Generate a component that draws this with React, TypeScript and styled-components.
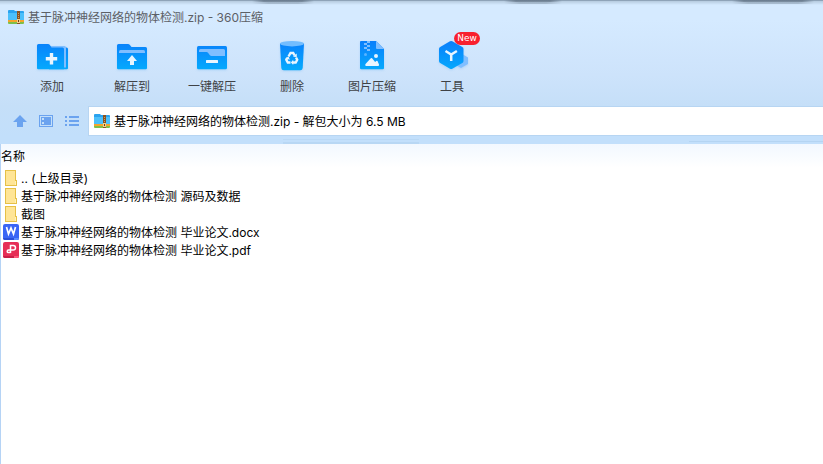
import React from "react";
import styled, { createGlobalStyle } from "styled-components";

const GlobalStyle = createGlobalStyle`
  * { box-sizing: border-box; }
  html, body, #root { height: 100%; margin: 0; }
  body, button, input, table {
    font-family: Inter, "Noto Sans CJK SC", sans-serif;
    font-size: 12px;
    line-height: 18px;
  }
  button { border: 0; padding: 0; background: none; cursor: pointer; }
  svg { display: block; flex: none; }
`;

const Window = styled.main`
  display: flex;
  flex-direction: column;
  min-height: 100%;
  background: #fff;
`;

const shade = "linear-gradient(90deg, #5d6e8000, #5d6e80b0 12px calc(100% - 12px), #5d6e8000)";
const softShade = "linear-gradient(90deg, #5d6e8000, #5d6e8050 16px calc(100% - 16px), #5d6e8000)";

const Header = styled.header`
  padding-bottom: 8px;
  background:
    linear-gradient(#b9d8f5, #b9d8f5) 283px 139px / 136px 1px no-repeat,
    linear-gradient(#b8d7f4, #b8d7f4) 283px 142px / 136px 2px no-repeat,
    linear-gradient(#b4d4f2, #b4d4f2) 689px 141px / 100% 1px no-repeat,
    ${shade} 252px 0 / 62px 2px no-repeat,
    ${softShade} 252px 2px / 62px 2px no-repeat,
    ${shade} 504px 0 / 58px 2px no-repeat,
    ${softShade} 504px 2px / 58px 2px no-repeat,
    ${shade} 732px 0 / 82px 2px no-repeat,
    ${softShade} 732px 2px / 82px 2px no-repeat,
    linear-gradient(#8ea3b8 0 1px, #b5cade 1px, #d5eaff00 5px),
    linear-gradient(#d5eaff 20px, #cde3fb 75px, #c5dff8 106px, #c2dffb 136px);
`;

const TitleBar = styled.div`
  display: flex;
  align-items: center;
  gap: 4px;
  height: 34px;
  padding: 0 8px;
`;

const Title = styled.h1`
  margin: 0;
  padding-top: 2px;
  font-size: 12px;
  font-weight: 400;
  color: #5c6066;
`;

const Toolbar = styled.nav`
  display: flex;
  height: 72px;
  padding: 4px 12px 0;
`;

const Tool = styled.button`
  position: relative;
  display: flex;
  flex-direction: column;
  align-items: center;
  gap: 4px;
  width: 80px;
  color: #3f4246;

  svg { filter: drop-shadow(0 1px 1px #6fb0f055); }
`;

const Badge = styled.span`
  position: absolute;
  top: -6px;
  left: 42px;
  width: 26px;
  border-radius: 7px;
  background: #f8202e;
  color: #fff;
  font-family: "DejaVu Sans", sans-serif;
  font-size: 9px;
  line-height: 13px;
`;

const AddressRow = styled.div`
  display: flex;
  align-items: stretch;
  height: 30px;
`;

const NavButtons = styled.div`
  display: flex;
  align-items: center;
  gap: 10px;
  width: 88px;
  padding-left: 12px;
`;

const NavButton = styled.button`
  width: 16px;
  height: 16px;
  color: #6ba3ef;
`;

const Address = styled.label`
  display: flex;
  flex: 1;
  align-items: center;
  gap: 4px;
  padding-left: 5px;
  border: 1px solid #b7d5f2;
  border-right: 0;
  background: #fff;
`;

const AddressInput = styled.input`
  flex: 1;
  min-width: 0;
  padding: 2px 0 0;
  border: 0;
  outline: 0;
  background: none;
  color: #000;
`;

const Files = styled.section`
  flex: 1;
  border-left: 1px solid #b5d3f5;
  background: linear-gradient(#f2f8ff, #fff 24px);
`;

const FileTable = styled.table`
  width: 100%;
  border-collapse: collapse;
  color: #000;
`;

const ColumnTitle = styled.th`
  height: 25px;
  padding: 0;
  font-weight: 400;
  text-align: left;
`;

const FileCell = styled.td`
  height: 18px;
  padding: 0 0 0 2px;
`;

const FileEntry = styled.div`
  display: flex;
  align-items: center;
  gap: 2px;
  height: 18px;
  white-space: pre;
`;

const FileName = styled.span`
  padding-top: 2px;
`;

const ZipIcon = () => (
  <svg width="16" height="16" viewBox="0 0 16 16" aria-hidden="true">
    <path d="M0 2q0-1 1-1h5l1 1h8q1 0 1 1v8H0z" fill="#2ba3ef" />
    <path d="M0 4h16v7H0z" fill="#4cc0fb" />
    <path d="M0 11h16v2H0z" fill="#f4a52b" />
    <path d="M0 13h16v1q0 1-1 1H1q-1 0-1-1z" fill="#7fbf4a" />
    <path d="M9 2h3v13H9z" fill="#8a5322" />
    <path d="M10 4h1v1h-1zM10 6h1v1h-1zM10 8h1v1h-1z" fill="#c99b62" />
    <path d="M9 10h3v4H9z" fill="#f3d08a" />
    <path d="M10 11h1v2h-1z" fill="#6b3d14" />
  </svg>
);

const Art = ({ children }: { children: React.ReactNode }) => (
  <svg width="32" height="36" viewBox="0 0 32 36" aria-hidden="true">
    <defs>
      <linearGradient id="blue" x1="0" y1="4" x2="0" y2="32" gradientUnits="userSpaceOnUse">
        <stop offset="0" stopColor="#0a80fb" />
        <stop offset="1" stopColor="#05aafd" />
      </linearGradient>
    </defs>
    {children}
  </svg>
);

const folder = "M1 7.500Q1 6 2.500 6H12q1 0 1.700.8L15.500 9H29.500Q31 9 31 10.500V30q0 1.300-1.300 1.300H2.300Q1 31.300 1 30z";

const tools = [
  {
    label: "添加",
    art: (
      <>
        <path d="M13 9.500h17.500q1.500 0 1.500 1.500v19q0 1.300-1.300 1.300H13z" fill="url(#blue)" />
        <path d="M13 8h15.500q1.500 0 1.500 1.500V29.500h-4V10H13z" fill="#80beff" />
        <path d="M1 7.500Q1 6 2.500 6H12q1 0 1.700.8L15.500 9.500H26.500Q28 9.500 28 11v20.300H2.300Q1 31.300 1 30z" fill="url(#blue)" />
        <path d="M13.800 15h3.400v4h4v3.400h-4v4h-3.400v-4h-4V19h4z" fill="#e8f5ff" />
      </>
    ),
  },
  {
    label: "解压到",
    art: (
      <>
        <path d={folder} fill="url(#blue)" />
        <path d="M3 15v-1.500Q3 12 4.500 12h23q1.500 0 1.500 1.500V15z" fill="#80beff" />
        <path d="m16 17 5 6h-3v4h-4v-4h-3z" fill="#e8f5ff" />
      </>
    ),
  },
  {
    label: "一键解压",
    art: (
      <>
        <rect x="1" y="8" width="30" height="23.300" rx="1.500" fill="url(#blue)" />
        <path d="M3 14v-1.500Q3 11 4.500 11h23q1.500 0 1.500 1.500V18H15.500q-1 0-1.600-.8L12 14.700q-.6-.7-1.500-.7z" fill="#80beff" />
        <rect x="10" y="22" width="12" height="3" rx=".5" fill="#e8f5ff" />
      </>
    ),
  },
  {
    label: "删除",
    art: (
      <>
        <path d="M4 5.500h24L26.700 30q-.2 2.300-2.500 2.300H7.800Q5.500 32.300 5.300 30z" fill="url(#blue)" />
        <ellipse cx="16" cy="5.700" rx="12" ry="2.700" fill="#73bdff" />
        <g fill="none" stroke="#e8f5ff" strokeWidth="2.400">
          <path d="m12.500 18.500 2-3.500h2.700l1.500 2.500" />
          <path d="m20 19.500 1.200 2.300-1.500 2.700h-3" />
          <path d="M14.500 24.500h-2.700l-1.500-2.700 1-1.800" />
        </g>
        <path d="m17 18.700 3.800.3-.1-3.500zM17.200 21.800v5.200l-2.300-2.600zM9.200 20.200l3.400-1.800 1.200 3.300z" fill="#e8f5ff" />
      </>
    ),
  },
  {
    label: "图片压缩",
    art: (
      <>
        <path d="M4 4q0-1 1-1h15l8 8v19q0 1.300-1.300 1.300H5.300Q4 31.300 4 30z" fill="url(#blue)" />
        <path d="m20 3 8 8h-7q-1 0-1-1z" fill="#80beff" />
        <path d="M11 3h3v2h-3zM8 5h3v2H8zM11 7h3v2h-3zM8 9h3v2H8zM11 11h3v2h-3z" fill="#80beff" />
        <circle cx="9.500" cy="16.500" r="1.500" fill="#58b3ff" />
        <circle cx="20" cy="18" r="2" fill="#e8f5ff" />
        <path d="m9.500 26 5.300-5.700q.7-.7 1.300 0l3 3.700 1.200-1q.7-.6 1.200 0l1.500 3.500q.3 1.500-1 1.500H10q-1.500-.5-.5-2z" fill="#e8f5ff" />
      </>
    ),
  },
  {
    label: "工具",
    badge: "New",
    art: (
      <>
        <path d="m27 16.500 5 3v6.500l-7 4-4-2.300z" fill="#80beff" />
        <path d="M14 3.300q1.200-.6 2.300 0l10 5.700q1.200.7 1.200 2v12q0 1.300-1.200 2l-10 5.700q-1.100.6-2.300 0L4.200 25Q3 24.300 3 23V11q0-1.300 1.200-2z" fill="url(#blue)" />
        <path d="m9.500 13 5.700 3.500 5.700-3.500M15.200 16.500V23" fill="none" stroke="#e8f5ff" strokeWidth="2.500" />
      </>
    ),
  },
];

const navItems = [
  { label: "向上", shape: <path d="m8 2 7 7h-4v5H5V9H1z" /> },
  {
    label: "预览",
    shape: (
      <>
        <path d="M1 2h14v12H1zm1 1v10h12V3z" fillRule="evenodd" />
        <path d="M3 4h10v8H3zm1 1v2h2V5zm0 4v2h2V9z" fillRule="evenodd" />
      </>
    ),
  },
  { label: "列表", shape: <path d="M1 3h2v2H1zM1 7h2v2H1zM1 11h2v2H1zM5 3h10v2H5zM5 7h10v2H5zM5 11h10v2H5z" /> },
];

type Kind = "folder" | "word" | "pdf";

const FileIcon = ({ kind }: { kind: Kind }) => (
  <svg width="16" height="16" viewBox="0 0 16 16" aria-hidden="true">
    {kind === "folder" && (
      <>
        <path d="M2 0h11v10h1v6H2z" fill="#e6c046" />
        <path d="M3 1h9v14H3z" fill="#ffe596" />
        <path d="M12 11h1v4h-1z" fill="#fff1b8" />
      </>
    )}
    {kind === "word" && (
      <>
        <rect width="16" height="16" rx="2" fill="#3b66f5" />
        <path d="M0 14h16q0 2-2 2H2q-2 0-2-2z" fill="#2c50d8" />
        <path d="M11 14h5q0 2-2 2h-3z" fill="#5b8cff" />
        <path d="m3.500 3 2 7L8 4l2.500 6 2-7" fill="none" stroke="#fff" strokeWidth="1.700" />
      </>
    )}
    {kind === "pdf" && (
      <>
        <rect width="16" height="16" rx="2" fill="#e62e56" />
        <path d="M0 14h16q0 2-2 2H2q-2 0-2-2z" fill="#c81f48" />
        <path d="M11 14h5q0 2-2 2h-3z" fill="#ff5578" />
        <path d="M7.500 11V3.500h2.700a2.300 2.300 0 0 1 0 4.600H5.500a1.300 1.300 0 0 0-1.300 1.300q0 1.100 1.300 1.100h2" fill="none" stroke="#fff" strokeWidth="1.500" />
      </>
    )}
  </svg>
);

const files: { name: string; kind: Kind }[] = [
  { name: ".. (上级目录)", kind: "folder" },
  { name: "基于脉冲神经网络的物体检测 源码及数据", kind: "folder" },
  { name: "截图", kind: "folder" },
  { name: "基于脉冲神经网络的物体检测 毕业论文.docx", kind: "word" },
  { name: "基于脉冲神经网络的物体检测 毕业论文.pdf", kind: "pdf" },
];

export default function App() {
  return (
    <Window>
      <GlobalStyle />
      <Header>
        <TitleBar>
          <ZipIcon />
          <Title>基于脉冲神经网络的物体检测.zip - 360压缩</Title>
        </TitleBar>
        <Toolbar>
          {tools.map((tool) => (
            <Tool key={tool.label} type="button">
              <Art>{tool.art}</Art>
              {tool.label}
              {tool.badge && <Badge>{tool.badge}</Badge>}
            </Tool>
          ))}
        </Toolbar>
        <AddressRow>
          <NavButtons>
            {navItems.map((item) => (
              <NavButton key={item.label} type="button" aria-label={item.label}>
                <svg width="16" height="16" viewBox="0 0 16 16" fill="currentColor">
                  {item.shape}
                </svg>
              </NavButton>
            ))}
          </NavButtons>
          <Address>
            <ZipIcon />
            <AddressInput
              type="text"
              aria-label="路径"
              defaultValue="基于脉冲神经网络的物体检测.zip - 解包大小为 6.5 MB"
            />
          </Address>
        </AddressRow>
      </Header>
      <Files>
        <FileTable>
          <thead>
            <tr>
              <ColumnTitle scope="col">名称</ColumnTitle>
            </tr>
          </thead>
          <tbody>
            {files.map((file) => (
              <tr key={file.name}>
                <FileCell>
                  <FileEntry>
                    <FileIcon kind={file.kind} />
                    <FileName>{file.name}</FileName>
                  </FileEntry>
                </FileCell>
              </tr>
            ))}
          </tbody>
        </FileTable>
      </Files>
    </Window>
  );
}
